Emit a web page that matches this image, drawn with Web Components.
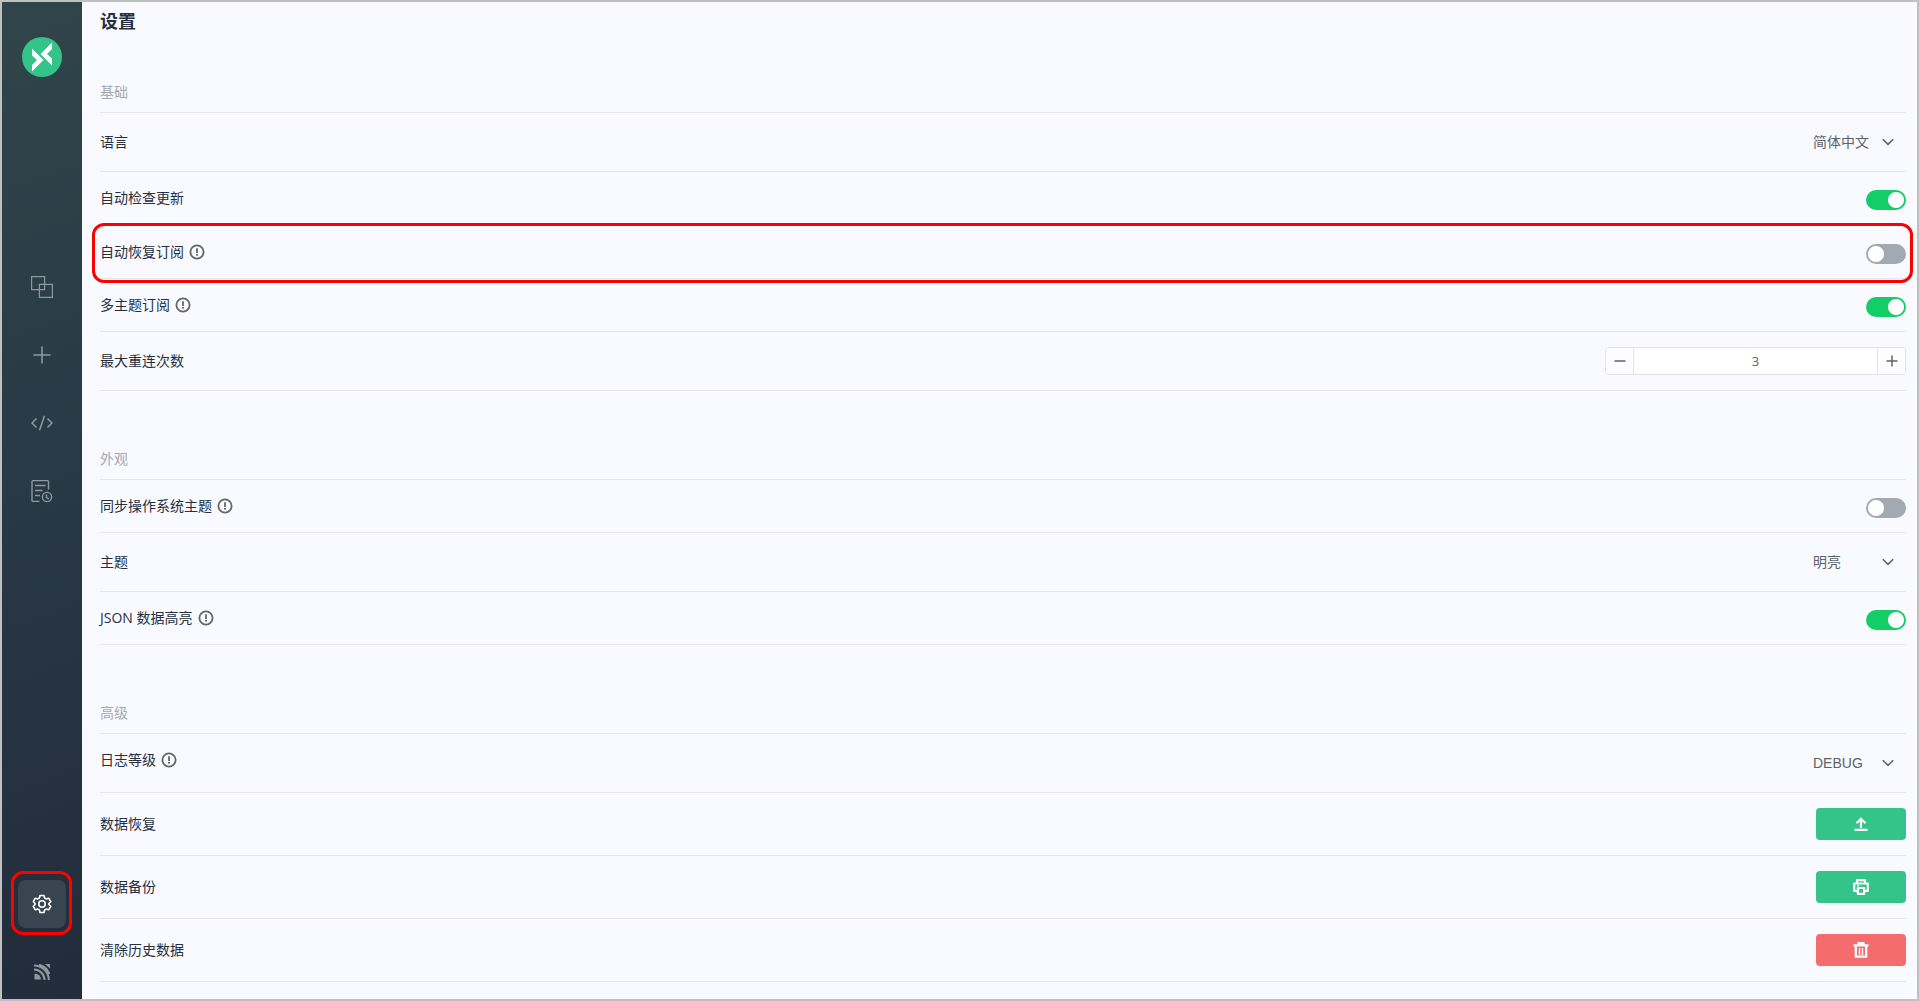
<!DOCTYPE html>
<html lang="zh-CN">
<head>
<meta charset="utf-8">
<title>设置</title>
<style>
  body {
    margin: 0;
    font-family: "Open Sans", "Noto Sans CJK SC", sans-serif;
    font-size: 14px;
    line-height: 20px;
    --line: #e4e7ed;
    --text: #262f40;
    --muted: #a2a9b0;
    --control: #606266;
    --green: #34c388;
    --red: #f56c6c;
    --mark: #ff0000;
  }
</style>
</head>
<body>
<app-shell>
  <side-nav slot="nav"></side-nav>
  <settings-page></settings-page>
</app-shell>

<script>
function define(name, html, setup) {
  const template = document.createElement('template');
  template.innerHTML = html;
  customElements.define(name, class extends HTMLElement {
    constructor() {
      super();
      this.attachShadow({ mode: 'open' }).append(template.content.cloneNode(true));
      if (setup) setup(this, this.shadowRoot);
    }
  });
}

define('app-shell', `
  <style>
    :host { display: flex; box-sizing: border-box; min-height: 100vh; border: 2px solid #c0c0c0; background: #f9faff; }
    ::slotted(side-nav) { flex: none; }
    main { flex: 1; min-width: 0; }
  </style>
  <slot name="nav"></slot>
  <main><slot></slot></main>`);

define('nav-item', `
  <style>
    :host { display: block; position: relative; width: 48px; height: 48px; color: #8d999f; }
    a { display: flex; align-items: center; justify-content: center; height: 100%; border-radius: 8px; color: inherit; }
    :host([active]) { color: #fff; }
    :host([active]) a { background: #394451; }
    :host([marked])::after {
      content: ""; position: absolute; inset: -9px -6px -7px -7px;
      border: 3px solid var(--mark); border-radius: 12px; pointer-events: none;
    }
  </style>
  <a href="#"><slot></slot></a>`, (host, root) => {
    root.querySelector('a').setAttribute('aria-label', host.getAttribute('name') || '');
  });

define('side-nav', `
  <style>
    :host {
      display: flex; flex-direction: column; align-items: center; box-sizing: border-box;
      width: 80px; padding: 35px 0 3px;
      background: linear-gradient(160deg, #30454a 0%, #293845 50%, #222c3b 100%);
    }
    .logo { display: block; width: 40px; height: 40px; }
    nav { display: flex; flex-direction: column; gap: 20px; flex: 1; padding-top: 186px; }
    .bottom { margin-top: auto; }
    svg { display: block; fill: none; stroke: currentColor; }
  </style>
  <svg class="logo" viewBox="0 0 40 40" stroke="none" role="img" aria-label="MQTTX">
    <circle cx="20" cy="20" r="20" fill="#34c388" stroke="none"/>
    <path d="M10 11.500 L21.500 23 L10 34.500 V28 L15 23 L10 18.500 Z" fill="#fff" stroke="none"/>
    <path d="M30 5.500 V12 L25 17 L30 21.500 V28.500 L18.500 17 Z" fill="#fff" stroke="none"/>
  </svg>
  <nav>
    <nav-item name="连接"><svg width="22" height="22" viewBox="0 0 22 22" stroke-width="1.200"><path d="M.6.6h13v13H.6zM8.400 8.400h13v13h-13z"/></svg></nav-item>
    <nav-item name="新建"><svg width="18" height="18" viewBox="0 0 18 18" stroke-width="1.600"><path d="M9 .5v17M.5 9h17"/></svg></nav-item>
    <nav-item name="脚本"><svg width="22" height="16" viewBox="0 0 22 16" stroke-width="1.500"><path d="M5.500 3.500 1 8l4.500 4.500M16.500 3.500 21 8l-4.500 4.500M13.500.8l-5 14.400"/></svg></nav-item>
    <nav-item name="日志"><svg width="22" height="22" viewBox="0 0 22 22" stroke-width="1.400"><path d="M17.500 9.500V1.600a1 1 0 0 0-1-1H2a1 1 0 0 0-1 1v18.800a1 1 0 0 0 1 1h6.500M4 5.500h10.500M4 10.500h7.500M4 15.500h5M15.500 14.500v3l2.500 1.500"/><circle cx="16" cy="17" r="4.600"/></svg></nav-item>
    <nav-item class="bottom" name="设置" active marked><svg width="20" height="20" viewBox="0 0 20 20" stroke-width="1.600" stroke-linejoin="round"><path d="M8 1.500h4l.6 2.500 1.600.9 2.500-.7 2 3.500-1.800 1.800v1l1.800 1.800-2 3.500-2.500-.7-1.600.9-.6 2.500H8L7.400 16l-1.600-.9-2.500.7-2-3.500 1.800-1.800v-1L1.300 7.700l2-3.500 2.500.7L7.400 4z"/><circle cx="10" cy="10" r="3.200"/></svg></nav-item>
    <nav-item name="关于"><svg width="16" height="16" viewBox="0 0 16 16" stroke-width="2"><path d="M.5 9.500a6.500 6 0 0 1 6.500 6H.5z" fill="currentColor" stroke="none"/><path d="M0 5.500c5.500 0 10.500 4.500 10.500 10.500M0 1.500C8 1.500 14.800 8 14.800 16M5 .8C9 1.500 13.500 5 15.500 10"/><path d="M11 0h5v4.500z" fill="currentColor" stroke="none"/></svg></nav-item>
  </nav>`);

define('info-icon', `
  <style>:host { display: block; width: 16px; height: 16px; } svg { display: block; }</style>
  <svg width="16" height="16" viewBox="0 0 16 16" fill="none" stroke="#666" stroke-width="1.800"><circle cx="8" cy="8" r="6.600"/><path d="M8 4.200v4.800M8 10v1.700"/></svg>`);

define('setting-row', `
  <style>
    :host {
      display: flex; justify-content: space-between; align-items: center; position: relative;
      box-sizing: border-box; min-height: 59px; border-bottom: 1px solid var(--line); color: var(--text);
    }
    :host([kind="switch"]) { min-height: 54px; }
    :host([kind="switch"][info]) { min-height: 53px; }
    :host([kind="action"]) { min-height: 63px; }
    .name { display: flex; align-items: center; gap: 5px; }
    :host([kind="switch"]) .name, :host([info]) .name { align-self: flex-start; height: 52px; }
    info-icon { display: none; }
    :host([info]) info-icon { display: block; }
    :host([marked])::after {
      content: ""; position: absolute; inset: -3px -7px -5px -8px;
      border: 3px solid var(--mark); border-radius: 12px; pointer-events: none;
    }
  </style>
  <div class="name"><slot name="label"></slot><info-icon></info-icon></div>
  <slot></slot>`);

define('settings-section', `
  <style>
    :host { display: block; }
    h2 { margin: 0; padding-bottom: 10px; border-bottom: 1px solid var(--line); font: inherit; color: var(--muted); }
  </style>
  <h2><slot name="heading"></slot></h2>
  <slot></slot>`);

define('toggle-switch', `
  <style>
    :host { display: block; align-self: flex-start; padding-top: 18px; }
    ::slotted(input) {
      appearance: none; display: block; width: 40px; height: 20px; margin: 0; border-radius: 10px;
      background: radial-gradient(circle at 10px 10px, #fff 7.500px, #a2a9b0 8.500px);
    }
    ::slotted(input:checked) { background: radial-gradient(circle at 30px 10px, #fff 7.500px, #13ce66 8.500px); }
  </style>
  <slot></slot>`);

define('option-select', `
  <style>
    :host { display: grid; align-items: center; width: 108px; color: var(--control); }
    ::slotted(select) {
      grid-area: 1 / 1; appearance: none; width: 100%; height: 32px; margin: 0; padding: 0 30px 0 15px;
      border: 0; background: transparent; color: inherit;
      font: 14px/20px "Liberation Sans", "Noto Sans CJK SC", sans-serif;
    }
    svg { grid-area: 1 / 1; justify-self: end; margin-right: 12px; pointer-events: none; }
  </style>
  <slot></slot>
  <svg width="12" height="8" viewBox="0 0 12 8" fill="none" stroke="currentColor" stroke-width="1.600"><path d="M.8 1.200 6 6.400l5.200-5.200"/></svg>`);

define('number-stepper', `
  <style>
    :host {
      display: flex; box-sizing: border-box; width: 301px; height: 28px; overflow: hidden;
      border: 1px solid #e1e4ee; border-radius: 4px; background: #fff; color: var(--control);
    }
    button { display: flex; align-items: center; justify-content: center; flex: none; width: 28px; padding: 0; border: 0; background: #fdfdff; color: inherit; }
    .minus { border-right: 1px solid #e1e4ee; }
    .plus { border-left: 1px solid #e1e4ee; }
    ::slotted(input) {
      flex: 1; min-width: 0; margin: 0; padding: 0; border: 0; background: transparent;
      color: inherit; text-align: center; font: 13px/20px "Open Sans", sans-serif;
    }
  </style>
  <button class="minus" type="button" aria-label="减少"><svg width="12" height="12" stroke="currentColor" stroke-width="1.500"><path d="M.5 6h11"/></svg></button>
  <slot></slot>
  <button class="plus" type="button" aria-label="增加"><svg width="12" height="12" stroke="currentColor" stroke-width="1.500"><path d="M.5 6h11M6 .5v11"/></svg></button>`,
  (host, root) => {
    root.querySelectorAll('button').forEach((button, i) => button.addEventListener('click', () => {
      const input = host.querySelector('input');
      input.value = Math.max(1, Number(input.value) + (i ? 1 : -1));
    }));
  });

define('action-button', `
  <style>
    :host { display: block; }
    button {
      display: flex; align-items: center; justify-content: center; width: 90px; height: 32px; padding: 0;
      border: 0; border-radius: 4px; background: var(--green); color: #fff;
    }
    :host([danger]) button { background: var(--red); }
  </style>
  <button type="button"><slot></slot></button>`, (host, root) => {
    root.querySelector('button').setAttribute('aria-label', host.getAttribute('name') || '');
  });

define('settings-page', `
  <style>
    :host { display: flex; flex-direction: column; padding: 0 11px 0 18px; }
    h1 { margin: 0; padding: 7px 0 49px; font-size: 18px; line-height: 24px; font-weight: 700; color: var(--text); }
    .sections { display: flex; flex-direction: column; gap: 58px; }
    svg { display: block; fill: none; stroke: currentColor; }
  </style>
  <h1>设置</h1>
  <div class="sections">
    <settings-section>
      <span slot="heading">基础</span>
      <setting-row><label slot="label" for="lang">语言</label>
        <option-select><select id="lang"><option>简体中文</option></select></option-select></setting-row>
      <setting-row kind="switch"><label slot="label" for="update">自动检查更新</label>
        <toggle-switch><input type="checkbox" id="update" checked></toggle-switch></setting-row>
      <setting-row kind="switch" info marked><label slot="label" for="resub">自动恢复订阅</label>
        <toggle-switch><input type="checkbox" id="resub"></toggle-switch></setting-row>
      <setting-row kind="switch" info><label slot="label" for="multi">多主题订阅</label>
        <toggle-switch><input type="checkbox" id="multi" checked></toggle-switch></setting-row>
      <setting-row><label slot="label" for="retry">最大重连次数</label>
        <number-stepper><input type="text" inputmode="numeric" id="retry" value="3"></number-stepper></setting-row>
    </settings-section>
    <settings-section>
      <span slot="heading">外观</span>
      <setting-row kind="switch" info><label slot="label" for="sync">同步操作系统主题</label>
        <toggle-switch><input type="checkbox" id="sync"></toggle-switch></setting-row>
      <setting-row><label slot="label" for="theme">主题</label>
        <option-select><select id="theme"><option>明亮</option></select></option-select></setting-row>
      <setting-row kind="switch" info><label slot="label" for="json">JSON 数据高亮</label>
        <toggle-switch><input type="checkbox" id="json" checked></toggle-switch></setting-row>
    </settings-section>
    <settings-section>
      <span slot="heading">高级</span>
      <setting-row info><label slot="label" for="log">日志等级</label>
        <option-select><select id="log"><option>DEBUG</option></select></option-select></setting-row>
      <setting-row kind="action"><span slot="label">数据恢复</span>
        <action-button name="数据恢复"><svg width="14" height="14" viewBox="0 0 14 14" stroke-width="2.200"><path d="M7 11V2M2.500 6.300 7 1.800l4.500 4.500M.5 12.800h13"/></svg></action-button></setting-row>
      <setting-row kind="action"><span slot="label">数据备份</span>
        <action-button name="数据备份"><svg width="16" height="16" viewBox="0 0 16 16" stroke-width="2.200" stroke-linejoin="round"><path d="M4 4V1.200h8V4M4 12H1.200V4.500h13.600V12H12"/><path d="M4.800 9h6.400v5.800H4.800z"/><path d="M4 6.800h2" stroke-width="1.400"/></svg></action-button></setting-row>
      <setting-row kind="action"><span slot="label">清除历史数据</span>
        <action-button name="清除历史数据" danger><svg width="16" height="16" viewBox="0 0 16 16" stroke-width="2.200"><path d="M.5 3.300h15M5.500 3V1.200h5V3M2.800 4v10.600h10.400V4"/><path d="M6.500 6v7M9.500 6v7" stroke-width="1.400"/></svg></action-button></setting-row>
    </settings-section>
  </div>`);
</script>
</body>
</html>
